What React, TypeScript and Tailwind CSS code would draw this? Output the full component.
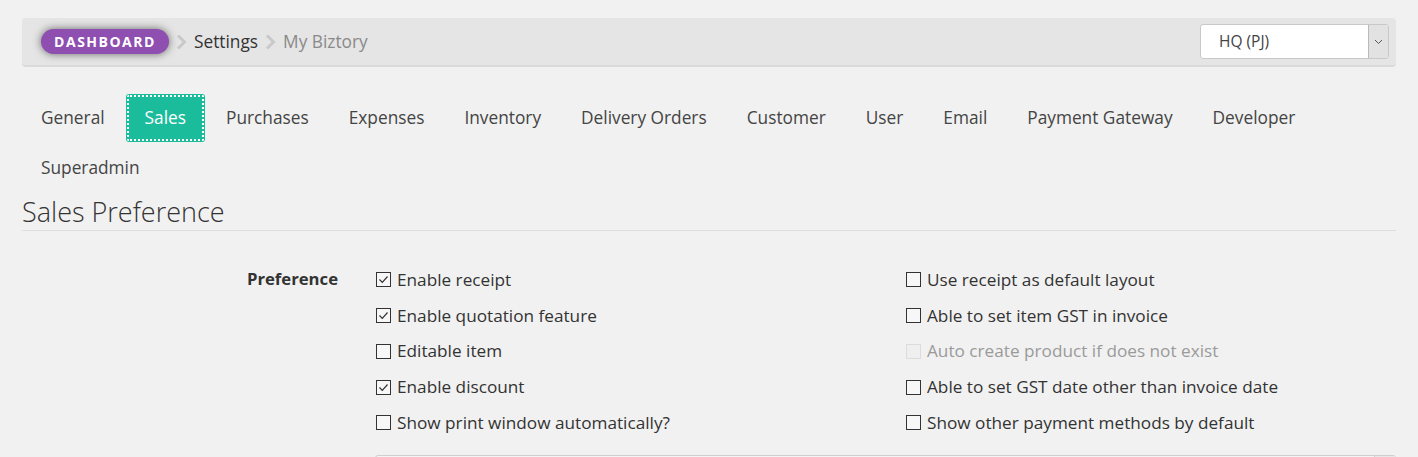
import React from "react";

const font = { fontFamily: "'Open Sans', 'Noto Sans', sans-serif" };

function Chevron() {
  return (
    <svg width="11" height="16" viewBox="0 0 11 16" className="mx-[7px]">
      <path d="M2 1.5 L8.5 8 L2 14.5" fill="none" stroke="#c9c9c9" strokeWidth="3" />
    </svg>
  );
}

function Box({ checked, disabled }: { checked?: boolean; disabled?: boolean }) {
  return (
    <span
      className={
        "inline-flex w-[15px] h-[15px] shrink-0 items-center justify-center border " +
        (disabled ? "border-[#dcdcdc] bg-[#efefef]" : "border-[#333] bg-[#f7f7f7]")
      }
    >
      {checked && (
        <svg width="11" height="11" viewBox="0 0 11 11">
          <path d="M1.5 5.5 L4.3 8.3 L9.5 2.5" fill="none" stroke="#333" strokeWidth="1.2" />
        </svg>
      )}
    </span>
  );
}

function Item({ label, checked, disabled }: { label: string; checked?: boolean; disabled?: boolean }) {
  return (
    <div className="flex items-center h-[35.75px] gap-[6px]">
      <Box checked={checked} disabled={disabled} />
      <span className={"text-[17.2px] " + (disabled ? "text-[#9a9a9a]" : "text-[#333]")}>{label}</span>
    </div>
  );
}

export default function App() {
  const tabs = [
    "General",
    "Sales",
    "Purchases",
    "Expenses",
    "Inventory",
    "Delivery Orders",
    "Customer",
    "User",
    "Email",
    "Payment Gateway",
    "Developer",
    "Superadmin",
  ];
  return (
    <div className="w-[1418px] h-[457px] overflow-hidden bg-[#f1f1f1] text-[#333]" style={font}>
      <div className="px-[22px] pt-[18px]">
        {/* breadcrumb bar */}
        <div className="h-[49px] rounded-[4px] bg-[#e5e5e5] border-b-2 border-[#dadada] flex items-center pl-[19px] pr-[7px]">
          <span className="h-[25px] w-[128px] rounded-full bg-[#8e4fb0] text-white font-bold text-[14px] tracking-[1.5px] flex items-center justify-center shadow-[0_0_8px_rgba(0,0,0,0.55)]">
            DASHBOARD
          </span>
          <Chevron />
          <span className="text-[17.3px] text-[#333]">Settings</span>
          <Chevron />
          <span className="text-[17.3px] text-[#8a8a8a]">My Biztory</span>
          <div className="ml-auto h-[35px] w-[189px] bg-white border border-[#c8c8c8] rounded-[3px] flex">
            <span className="flex-1 flex items-center pl-[18px] text-[15.5px] text-[#444]">HQ (PJ)</span>
            <span className="w-[20px] bg-[#e2e2e2] border-l border-[#b9b9b9] flex items-center justify-center">
              <svg width="9" height="6" viewBox="0 0 9 6">
                <path d="M1 1 L4.5 4.5 L8 1" fill="none" stroke="#555" strokeWidth="1" />
              </svg>
            </span>
          </div>
        </div>

        {/* tabs */}
        <div className="flex flex-wrap mt-[27px] gap-x-[2px] gap-y-[2px]">
          {tabs.map((t) => (
            <div
              key={t}
              className={
                "h-[48px] px-[19px] flex items-center text-[17.3px] rounded-[3px] " +
                (t === "Sales" ? "bg-[#1abc9c] text-white outline-dotted outline-2 outline-white -outline-offset-[3px]" : "text-[#444]")
              }
            >
              {t}
            </div>
          ))}
        </div>

        {/* heading */}
        <div className="mt-[2px] border-b border-[#dedede]">
          <h2 className="text-[27px] font-light text-[#333] leading-[36px]">Sales Preference</h2>
        </div>

        {/* form */}
        <div className="flex mt-[31px]">
          <div className="w-[316px] text-right font-bold text-[16.7px] text-[#333] pt-[4px]">Preference</div>
          <div className="ml-[38px] w-[530px]">
            <Item label="Enable receipt" checked />
            <Item label="Enable quotation feature" checked />
            <Item label="Editable item" />
            <Item label="Enable discount" checked />
            <Item label="Show print window automatically?" />
          </div>
          <div>
            <Item label="Use receipt as default layout" />
            <Item label="Able to set item GST in invoice" />
            <Item label="Auto create product if does not exist" disabled />
            <Item label="Able to set GST date other than invoice date" />
            <Item label="Show other payment methods by default" />
          </div>
        </div>
        <div className="ml-[353px] mt-[14px] h-[34px] border border-[#cfcfcf] rounded-[3px] bg-[#f4f4f4] flex justify-end">
          <span className="w-[21px] border-l border-[#cfcfcf] bg-[#e8e8e8]" />
        </div>
      </div>
    </div>
  );
}
